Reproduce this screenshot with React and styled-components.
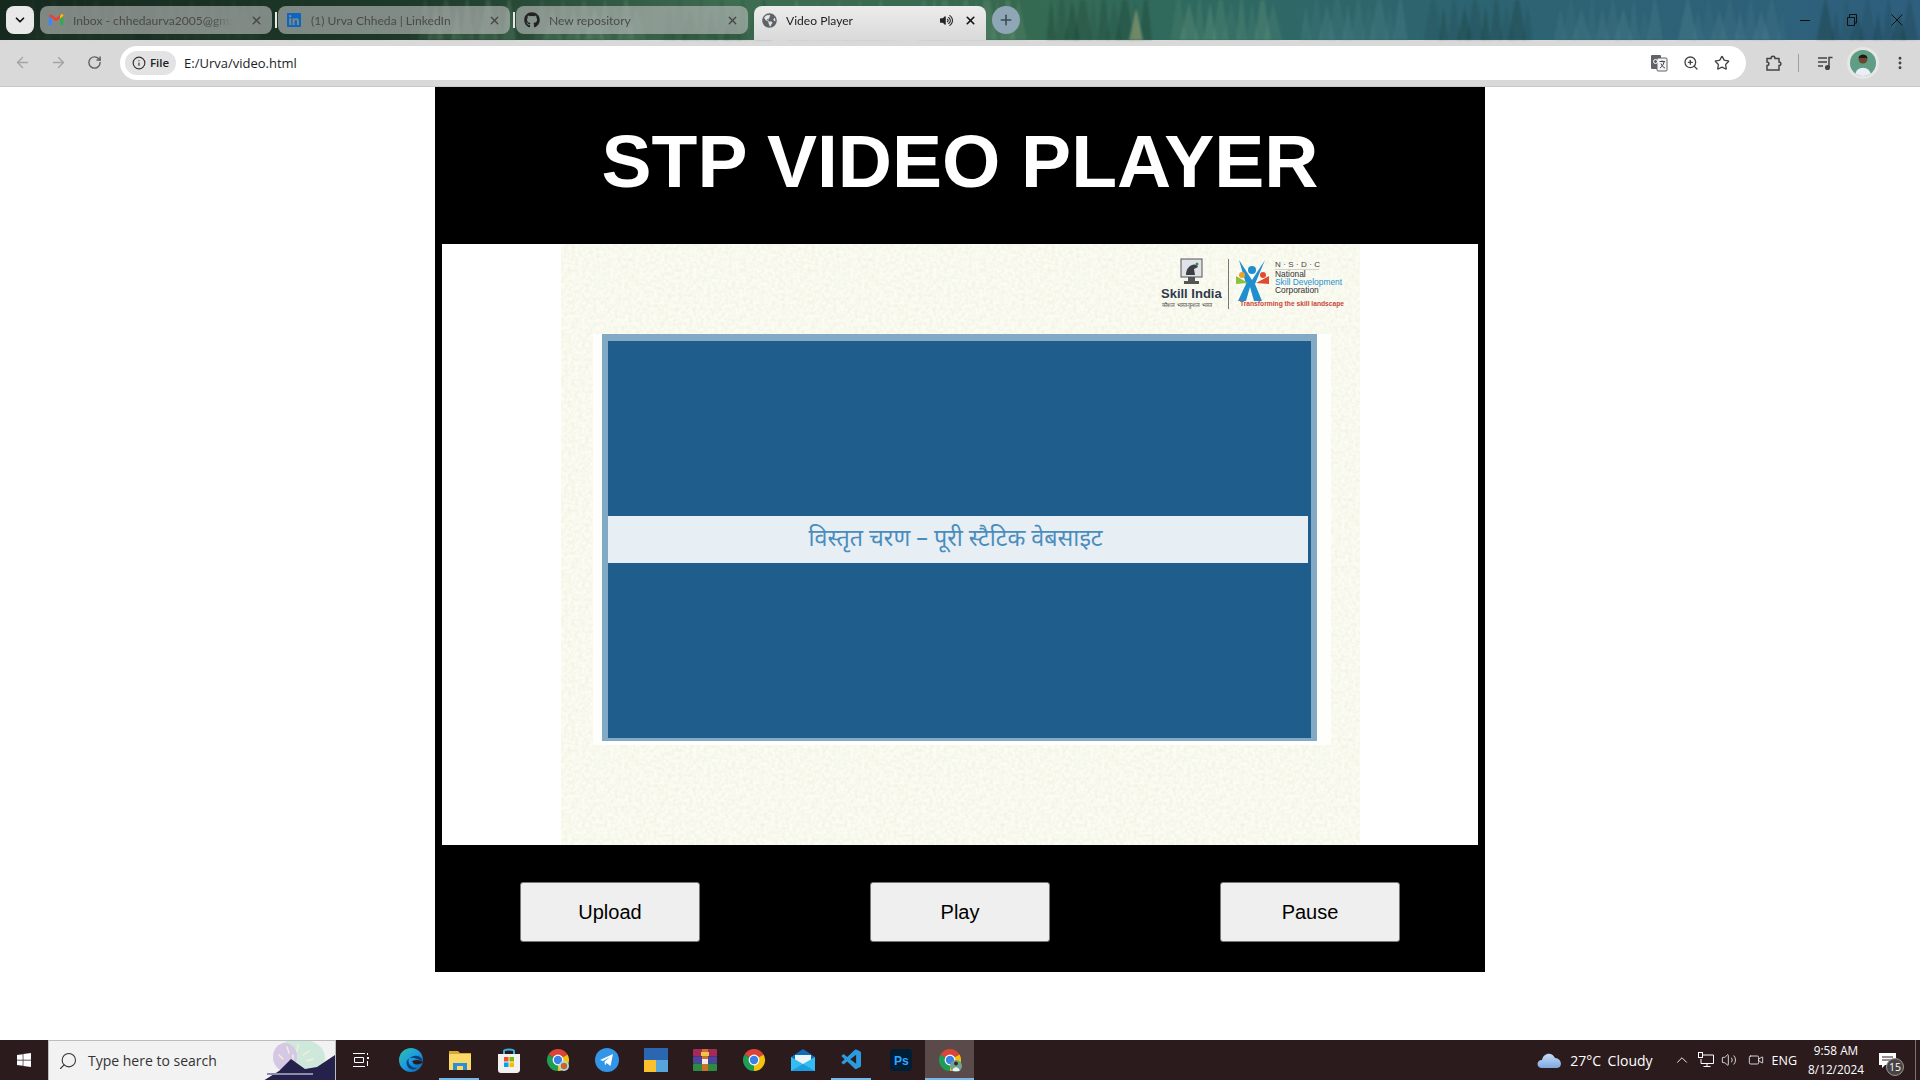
import React from 'react';
import styled, {createGlobalStyle} from 'styled-components';
import {ArrowLeft, ArrowRight, ChevronDown, ChevronUp, Info, MoreVertical, Plus, RotateCw, Search, Star, Video, Volume2, X, ZoomIn} from 'lucide-react';
import {FaGithub, FaGlobeAmericas, FaLinkedin, FaVolumeUp, FaWindows} from 'react-icons/fa';
import {VscVscode} from 'react-icons/vsc';

const GlobalStyle = createGlobalStyle`
  html, body {
    margin: 0;
    padding: 0;
    background: white;
  }
  * {
    box-sizing: border-box;
  }
`

const Page = styled.div`
  width: 1920px;
  height: 1080px;
  display: flex;
  flex-direction: column;
  overflow: hidden;
  font-family: "Open Sans", "Noto Sans", sans-serif;
`

/* ---- browser tabs ---- */

const TabStrip = styled.div`
  position: relative;
  height: 40px;
  flex: none;
  display: flex;
  align-items: flex-start;
  padding: 6px 0 0 6px;
  background: linear-gradient(90deg, #16291f 0%, #1d3a2a 22%, #3f6d52 38%, #36694f 52%, #2f6a5f 62%, #2d6470 75%, #2e5f7e 100%);
`

const Forest = styled.svg`
  position: absolute;
  left: 0;
  top: 0;
  pointer-events: none;
  filter: blur(1.2px);
`

const TabSearch = styled.div`
  position: relative;
  width: 28px;
  height: 28px;
  margin-right: 6px;
  border-radius: 8px;
  background: #e9e9e9;
  display: flex;
  align-items: center;
  justify-content: center;
  color: #111;
`

const Tab = styled.div`
  position: relative;
  width: 232px;
  height: ${props => props.$active ? '34px' : '28px'};
  margin-right: 6px;
  padding: ${props => props.$active ? '0 9px 6px 8px' : '0 9px 0 8px'};
  display: flex;
  align-items: center;
  gap: 9px;
  font-family: Lato, "Open Sans", sans-serif;
  font-size: 12.1px;
  white-space: nowrap;
  color: ${props => props.$active ? '#222' : '#4a4a4a'};
  border-radius: ${props => props.$active ? '8px 8px 0 0' : '8px'};
  background: ${props => props.$active ? 'linear-gradient(#ececec, #d9d9d9)' : 'rgba(190, 190, 190, 0.62)'};
`

const TabTitle = styled.span`
  flex: 1;
  overflow: hidden;
  mask-image: linear-gradient(90deg, #000 82%, transparent 95%);
`

const TabDivider = styled.div`
  position: absolute;
  right: -5px;
  top: 6px;
  width: 2px;
  height: 16px;
  background: #e8e8e8;
`

const NewTab = styled.div`
  position: relative;
  width: 28px;
  height: 28px;
  border-radius: 50%;
  background: #8fa6b6;
  color: #3c4a52;
  display: flex;
  align-items: center;
  justify-content: center;
`

const WindowControls = styled.div`
  position: absolute;
  right: 0;
  top: 6px;
  display: flex;
  color: #111;
`

const WindowButton = styled.div`
  width: 46px;
  height: 28px;
  display: flex;
  align-items: center;
  justify-content: center;
`

/* ---- address bar ---- */

const Toolbar = styled.div`
  height: 47px;
  flex: none;
  display: flex;
  align-items: center;
  padding: 0 8px 1px 4px;
  background: #d9d9d9;
  border-bottom: 1px solid #c8c8c8;
`

const NavButton = styled.div`
  width: 36px;
  height: 28px;
  display: flex;
  align-items: center;
  justify-content: center;
  color: ${props => props.$dim ? '#a4a4a4' : '#5f5f5f'};
`

const Omnibox = styled.div`
  width: 1626px;
  height: 34px;
  margin-left: 8px;
  padding: 0 16px 0 5px;
  border-radius: 17px;
  background: white;
  display: flex;
  align-items: center;
`

const FileChip = styled.div`
  width: 51px;
  height: 24px;
  border-radius: 12px;
  background: #e3e3e3;
  display: flex;
  align-items: center;
  justify-content: center;
  gap: 4px;
  font-size: 11.5px;
  font-weight: 600;
  color: #222;
`

const Url = styled.span`
  flex: 1;
  margin-left: 8px;
  font-size: 13px;
  color: #1c1c1c;
`

const BarIcons = styled.div`
  display: flex;
  align-items: center;
  gap: 15px;
  color: #444;
`

const ToolIcons = styled.div`
  flex: 1;
  display: flex;
  align-items: center;
  justify-content: space-between;
  padding: 0 4px 0 18px;
  color: #444;
`

const BarRule = styled.div`
  width: 1px;
  height: 18px;
  background: #9aa0a6;
`

const Avatar = styled.div`
  width: 26px;
  height: 26px;
  border-radius: 50%;
  box-shadow: 0 0 0 3px #e6e6e6;
  overflow: hidden;
`

/* ---- the page in the browser ---- */

const Content = styled.main`
  flex: 1;
  display: flex;
  justify-content: center;
  background: white;
`

const Player = styled.div`
  width: 1050px;
  height: 885px;
  background: black;
  display: flex;
  flex-direction: column;
`

const Title = styled.h1`
  height: 157px;
  margin: 0;
  padding-bottom: 10px;
  flex: none;
  display: flex;
  align-items: center;
  justify-content: center;
  color: white;
  font-family: "Liberation Sans", Arial, sans-serif;
  font-size: 75px;
  font-weight: bold;
`

const Screen = styled.div`
  height: 601px;
  margin: 0 7px;
  flex: none;
  background: white;
  display: flex;
  justify-content: center;
`

const VideoFrame = styled.div`
  width: 799px;
  height: 601px;
  background-color: #fcfcf4;
  background-image: url("data:image/svg+xml,%3Csvg xmlns='http://www.w3.org/2000/svg' width='240' height='240'%3E%3Cfilter id='n'%3E%3CfeTurbulence type='fractalNoise' baseFrequency='0.28' numOctaves='3'/%3E%3CfeColorMatrix values='0 0 0 0 0.86 0 0 0 0 0.88 0 0 0 0 0.72 0 0 0 1.6 -0.55'/%3E%3C/filter%3E%3Crect width='240' height='240' filter='url(%23n)'/%3E%3C/svg%3E");
  display: flex;
  flex-direction: column;
`

const LogoRow = styled.div`
  height: 90px;
  flex: none;
  display: flex;
  justify-content: flex-end;
  padding: 13px 12px 0 0;
`

const Slide = styled.div`
  width: 738px;
  height: 411px;
  margin-left: 32px;
  padding: 0 14px 4px 9px;
  background: #fefefc;
`

const SlideBorder = styled.div`
  height: 407px;
  padding: 7px 6px 3px 6px;
  background: #82aac4;
`

const SlideBody = styled.div`
  height: 100%;
  padding-top: 175px;
  background: #1f5e8c;
`

const Caption = styled.div`
  width: 700px;
  height: 47px;
  display: flex;
  align-items: center;
  justify-content: center;
  padding: 1px 4px 0 0;
  background: #e8eff4;
  color: #4a8dbd;
  font-family: "Noto Sans Devanagari", "Lohit Devanagari", "Noto Sans", sans-serif;
  font-size: 23.3px;
`

const Controls = styled.div`
  flex: 1;
  display: flex;
  align-items: center;
  justify-content: space-around;
  padding-top: 7px;
`

const Button = styled.button`
  width: 180px;
  height: 60px;
  border: 1px solid #777;
  border-radius: 3px;
  background: #efefef;
  color: black;
  font-family: "Liberation Sans", Arial, sans-serif;
  font-size: 20px;
`

/* ---- windows taskbar ---- */

const Taskbar = styled.footer`
  height: 40px;
  flex: none;
  display: flex;
  align-items: stretch;
  background: #2c1b1d;
  color: white;
`

const StartButton = styled.div`
  width: 48px;
  display: flex;
  align-items: center;
  justify-content: center;
`

const SearchBox = styled.div`
  position: relative;
  width: 288px;
  padding-left: 9px;
  display: flex;
  align-items: center;
  gap: 10px;
  background: #f2f2f2;
  border: 1px solid #bdbdbd;
  border-bottom: none;
  color: #333;
  font-size: 14px;
  overflow: hidden;
`

const SearchArt = styled.svg`
  position: absolute;
  right: 0;
  top: 0;
`

const TaskIcons = styled.div`
  display: flex;
`

const TaskItem = styled.div`
  width: ${props => props.$wide ? '50px' : '49px'};
  display: flex;
  align-items: center;
  justify-content: center;
  background: ${props => props.$active ? '#5a4a4a' : 'transparent'};
  position: relative;

  &::after {
    content: '';
    display: ${props => props.$open ? 'block' : 'none'};
    position: absolute;
    bottom: 0;
    left: ${props => props.$active ? '0' : '4px'};
    right: ${props => props.$active ? '0' : '5px'};
    height: 2px;
    background: #76b9ed;
  }
`

const Tray = styled.div`
  flex: 1;
  display: flex;
  align-items: center;
  justify-content: flex-end;
  font-size: 12.5px;
`

const Weather = styled.div`
  display: flex;
  align-items: center;
  margin-right: 20px;
  gap: 8px;
  font-size: 14px;
`

const WeatherText = styled.span`
  word-spacing: 3px;
`

const TrayIcons = styled.div`
  display: flex;
  align-items: center;
  gap: 7px;
  margin-right: 8px;
`

const MeetIcon = styled(Video)`
  margin-left: 4px;
`

const Clock = styled.div`
  width: 62px;
  margin-left: 8px;
  text-align: center;
  font-size: 11.8px;
  line-height: 19px;
`

const Notify = styled.div`
  position: relative;
  width: 46px;
  height: 100%;
  margin: 0 4px 0 3px;
  padding-right: 10px;
  display: flex;
  align-items: center;
  justify-content: center;
  border-right: 1px solid #777;
`

const NotifyCount = styled.span`
  position: absolute;
  left: 16px;
  top: 18px;
  width: 18px;
  height: 18px;
  border-radius: 50%;
  background: #4a4343;
  border: 1px solid #999;
  font-size: 10.5px;
  line-height: 16px;
  text-align: center;
`

/* ---- drawings ---- */

const Trees = () => {
    const trees = [];
    for(let i = 0; i < 150; i++){
        const x = (i * 127.3) % 1920;
        const w = 10 + (i * 7) % 12;
        const h = 30 + (i * 13) % 30;
        const light = x > 420 ? 0.1 + ((i * 3) % 7) / 40 : 0.04;
        const shade = i % 3 === 0 ? '#0f2a20' : (x > 1300 ? '#5d8f97' : '#80aa8b');
        trees.push(<polygon key={i} points={`${x},${42 - h} ${x + w / 2},42 ${x - w / 2},42`} fill={shade} opacity={light}/>);
    }
    return (
        <Forest width="1920" height="40">
            {trees}
            <polygon points="1136,8 1143,40 1129,40" fill="#8b9a72" opacity="0.7"/>
        </Forest>
    );
}

const sector = (from, to, r = 11) => {
    const a = from * Math.PI / 180;
    const b = to * Math.PI / 180;
    return `M12 12 L${12 + r * Math.cos(a)} ${12 + r * Math.sin(a)} A${r} ${r} 0 0 1 ${12 + r * Math.cos(b)} ${12 + r * Math.sin(b)} Z`;
}

const Chrome = ({size = 24, badge}) => (
    <svg width={size} height={size} viewBox="0 0 24 24">
        <path d={sector(-150, -30)} fill="#db4437"/>
        <path d={sector(-30, 90)} fill="#f4c20d"/>
        <path d={sector(90, 210)} fill="#1f9d55"/>
        <circle cx="12" cy="12" r="5.4" fill="white"/>
        <circle cx="12" cy="12" r="4.2" fill="#3b82e8"/>
        {badge === 'orange' && <>
            <circle cx="18" cy="18" r="5" fill="#a8dde0"/>
            <circle cx="18" cy="18" r="3.2" fill="#d2602a"/>
        </>}
        {badge === 'person' && <>
            <circle cx="18" cy="18" r="6" fill="#6fa58f"/>
            <circle cx="18" cy="15.5" r="2" fill="#3a2a22"/>
            <path d="M14.5 23 C14.5 18 21.5 18 21.5 23 Z" fill="#eef2f6"/>
        </>}
    </svg>
)

const Gmail = () => (
    <svg width="16" height="16" viewBox="0 0 24 24">
        <path d="M1 6 V20 H6 V10 Z" fill="#4285f4"/>
        <path d="M23 6 V20 H18 V10 Z" fill="#34a853"/>
        <path d="M1 6 L12 14 L23 6 L20 3 L12 9 L4 3 Z" fill="#ea4335"/>
        <path d="M18 6 L20 3 C22 3 23 4 23 6 L18 10 Z" fill="#fbbc04"/>
    </svg>
)

const Translate = () => (
    <svg width="18" height="18" viewBox="0 0 18 18">
        <rect x="1" y="1" width="10" height="14" rx="1" fill="#5f6368"/>
        <rect x="7" y="4" width="10" height="13" rx="1" fill="#f4f4f4" stroke="#5f6368"/>
        <path d="M9.5 7.5 H15 M12 6.5 V8 M14 8 C13.5 11 11.5 13 10 14 M11 9.5 C12 12 13.5 13.5 15 14" stroke="#444" fill="none"/>
        <circle cx="5.5" cy="7.5" r="2" fill="none" stroke="white"/>
    </svg>
)

const Extension = () => (
    <svg width="18" height="18" viewBox="0 0 18 18" fill="none" stroke="#444" strokeWidth="1.5">
        <path d="M3 4.5 H7 C7 1.5 11 1.5 11 4.5 H15 V8 C17.5 8 17.5 11.5 15 11.5 V16 H3 V11.5 C5.5 11.5 5.5 8 3 8 Z"/>
    </svg>
)

const MediaQueue = () => (
    <svg width="18" height="18" viewBox="0 0 18 18" fill="none" stroke="#444" strokeWidth="1.5">
        <path d="M2 4 H11 M2 8 H11 M2 12 H7 M13 13 V3.5 H16.5"/>
        <circle cx="11.5" cy="13.5" r="1.8" fill="#444"/>
    </svg>
)

const Person = () => (
    <svg width="26" height="26" viewBox="0 0 26 26">
        <rect width="26" height="26" fill="#5f9d84"/>
        <circle cx="13" cy="9" r="4.5" fill="#6b4630"/>
        <path d="M8.5 8 C9 3.5 17 3.5 17.5 8 Z" fill="#1f1a18"/>
        <path d="M5 26 C5 15 21 15 21 26 Z" fill="#e9eff6"/>
    </svg>
)

const NsdcFigure = () => (
    <g>
        <path d="M81 3 L94 23 L107 3 L97 27 L104 44 L96 44 L92 30 L88 44 L80 44 L88 27 Z" fill="#1f8fd0"/>
        <circle cx="94" cy="13" r="4" fill="#1f8fd0"/>
        <path d="M78 19 L90 26 L78 27 Z" fill="#8ebf3f"/>
        <circle cx="84" cy="18" r="3" fill="#f0a030"/>
        <path d="M111 19 L98 26 L111 27 Z" fill="#e2492f"/>
        <circle cx="105" cy="18" r="3" fill="#e2492f"/>
    </g>
)

const Logos = () => (
    <svg width="190" height="54" viewBox="0 0 190 54" fontFamily="'Liberation Sans', Arial, sans-serif">
        <rect x="23" y="2" width="21" height="18" fill="#dfe3e8" stroke="#555"/>
        <path d="M28 18 C28 8 38 5 40 10 L36 12 L37 18 Z" fill="#3b3f46"/>
        <circle cx="39" cy="7" r="1.5" fill="#3b8f4a"/>
        <path d="M30 20 H37 V24 H41 V27 H26 V24 H30 Z" fill="#555"/>
        <text x="3" y="41" fontSize="13" fontWeight="bold" fill="#2f3a4a">Skill India</text>
        <text x="4" y="50" fontSize="5.5" fill="#444">कौशल भारत-कुशल भारत</text>
        <rect x="70" y="2" width="1" height="50" fill="#777"/>
        <NsdcFigure/>
        <text x="117" y="10" fontSize="8" letterSpacing="2.4" fill="#444">N·S·D·C</text>
        <rect x="117" y="12" width="44" height="0.6" fill="#bbb"/>
        <text x="117" y="20" fontSize="8.4" fill="#333">National</text>
        <text x="117" y="28" fontSize="8.4" fill="#1f8fd0">Skill Development</text>
        <text x="117" y="36" fontSize="8.4" fill="#333">Corporation</text>
        <text x="82" y="49" fontSize="6.7" fontWeight="bold" fill="#c8463a">Transforming the skill landscape</text>
    </svg>
)

const Edge = () => (
    <svg width="24" height="24" viewBox="0 0 24 24">
        <defs>
            <linearGradient id="edgeGrad" x1="0" y1="0" x2="1" y2="1">
                <stop offset="0" stopColor="#2fc1a5"/>
                <stop offset="0.5" stopColor="#1b9de2"/>
                <stop offset="1" stopColor="#0c59a4"/>
            </linearGradient>
        </defs>
        <circle cx="12" cy="12" r="12" fill="url(#edgeGrad)"/>
        <path d="M24 13 C22 7 14 6 10 11 C8 15 12 20 18 20 C14 23 9 21 8 17 C6 12 11 9 15 10" fill="#0d3f7a"/>
        <path d="M13 13 C17 11 22 12 24 14 C23 16 18 17 15 16 Z" fill="#2c1b1d"/>
    </svg>
)

const Explorer = () => (
    <svg width="24" height="22" viewBox="0 0 24 22">
        <path d="M1 2 H10 L12 4 H23 V21 H1 Z" fill="#d9a92f"/>
        <rect x="1" y="5" width="22" height="16" fill="#fbd968"/>
        <path d="M5 21 V14 H19 V21 H15 V17 H9 V21 Z" fill="#2d8ed8"/>
    </svg>
)

const Store = () => (
    <svg width="24" height="25" viewBox="0 0 24 25">
        <path d="M7 7 V3 C7 1 17 1 17 3 V7" fill="none" stroke="#35b4e8" strokeWidth="2"/>
        <path d="M1 6 H23 V22 C23 24 21 25 20 25 H4 C2 25 1 24 1 22 Z" fill="#f1f1f1"/>
        <rect x="7" y="9" width="4.5" height="4.5" fill="#f25022"/>
        <rect x="12.5" y="9" width="4.5" height="4.5" fill="#7fba00"/>
        <rect x="7" y="14.5" width="4.5" height="4.5" fill="#00a4ef"/>
        <rect x="12.5" y="14.5" width="4.5" height="4.5" fill="#ffb900"/>
    </svg>
)

const Telegram = () => (
    <svg width="24" height="24" viewBox="0 0 24 24">
        <circle cx="12" cy="12" r="12" fill="#3295e8"/>
        <path d="M5 12 L18 6 L15.5 18 L11.5 15 L10 17.5 L9.5 13.5 L15 9 L8 13 Z" fill="white"/>
    </svg>
)

const Tiles = () => (
    <svg width="24" height="24" viewBox="0 0 24 24">
        <rect width="24" height="12" fill="#2a67b0"/>
        <rect y="12" width="12" height="12" fill="#fbc02d"/>
        <rect x="12" y="12" width="12" height="12" fill="#58a5dc"/>
    </svg>
)

const WinRar = () => (
    <svg width="24" height="22" viewBox="0 0 24 22">
        <rect y="0" width="24" height="7.5" rx="1" fill="#a52a5a"/>
        <rect y="7.5" width="24" height="7" fill="#4d43a0"/>
        <rect y="14.5" width="24" height="7.5" rx="1" fill="#2f8a43"/>
        <rect x="9" y="0" width="6" height="22" fill="#c9722b"/>
        <rect x="8" y="3" width="8" height="4" fill="#f2c14e"/>
        <rect x="9" y="10" width="6" height="5" fill="#eeeeee"/>
    </svg>
)

const Mail = () => (
    <svg width="24" height="24" viewBox="0 0 24 24">
        <path d="M0 9 L12 1 L24 9 V23 H0 Z" fill="#0f6cbd"/>
        <path d="M4 7 H20 V14 L12 17 L4 14 Z" fill="#eef3f7"/>
        <path d="M0 9 L12 16 L24 9 V23 H0 Z" fill="#33bdf2"/>
        <path d="M0 23 L12 16 L24 23 Z" fill="#1b9de2"/>
    </svg>
)

const Photoshop = () => (
    <svg width="22" height="22" viewBox="0 0 22 22">
        <rect width="22" height="22" rx="4" fill="#001e36"/>
        <text x="4" y="16" fontSize="12" fontWeight="bold" fontFamily="'Liberation Sans', sans-serif" fill="#31a8ff">Ps</text>
    </svg>
)

const TaskView = () => (
    <svg width="16" height="16" viewBox="0 0 16 16" fill="none" stroke="white">
        <path d="M0 1.5 H12 M0 14.5 H12 M1.5 5.5 H10.5 V10.5 H1.5 Z"/>
        <rect x="14" y="5" width="2" height="2" fill="white" stroke="none"/>
        <rect x="14" y="9" width="1" height="5" fill="white" stroke="none"/>
        <rect x="14" y="1" width="1" height="2" fill="white" stroke="none"/>
    </svg>
)

const Cloud = () => (
    <svg width="25" height="16" viewBox="0 0 25 16">
        <defs>
            <linearGradient id="cloudGrad" x1="0" y1="0" x2="0" y2="1">
                <stop offset="0" stopColor="#c5dcf6"/>
                <stop offset="1" stopColor="#7fa8e0"/>
            </linearGradient>
        </defs>
        <path d="M5 16 C-1 16 -1 8 5 8 C6 1 15 -1 18 6 C25 6 26 16 20 16 Z" fill="url(#cloudGrad)"/>
    </svg>
)

const Network = () => (
    <svg width="16" height="16" viewBox="0 0 16 16" fill="none" stroke="white">
        <path d="M3 3 H15.5 V11.5 H3 V7 M9 11.5 V14.5 M5.5 14.5 H12.5"/>
        <rect x="0.5" y="0.5" width="4" height="5" fill="#2c1b1d"/>
    </svg>
)

const Bubble = () => (
    <svg width="17" height="15" viewBox="0 0 17 15">
        <path d="M0 0 H17 V12 H6 L3 15 V12 H0 Z" fill="white"/>
        <path d="M3 4 H14 M3 7 H14" stroke="#2c1b1d"/>
    </svg>
)

const SearchPicture = () => (
    <SearchArt width="72" height="40" viewBox="0 0 72 40">
        <ellipse cx="36" cy="16" rx="26" ry="18" fill="#bfe6d2" opacity="0.7"/>
        <ellipse cx="22" cy="16" rx="12" ry="14" fill="#d6bfe6" opacity="0.8"/>
        <g stroke="#f4f0d8" strokeWidth="1.4" strokeLinecap="round">
            <path d="M20 18 L16 14 M26 12 L24 6 M34 10 L35 4 M40 14 L46 10 M30 18 L30 14 M44 20 L50 18"/>
        </g>
        <path d="M0 40 L16 30 L28 18 L42 28 L54 26 L72 14 V40 Z" fill="#24224a"/>
        <path d="M4 33 H50" stroke="#8f8aa8" strokeWidth="2"/>
    </SearchArt>
)

const tabs = [
    {title: 'Inbox - chhedaurva2005@gmail.com', icon: <Gmail/>},
    {title: '(1) Urva Chheda | LinkedIn', icon: <FaLinkedin size={16} color="#0a66c2"/>},
    {title: 'New repository', icon: <FaGithub size={16} color="#222"/>}
];

const App = () => (
    <Page>
        <GlobalStyle/>
        <TabStrip>
            <Trees/>
            <TabSearch><ChevronDown size={14} strokeWidth={3}/></TabSearch>
            {tabs.map((tab, i) =>
                <Tab key={tab.title}>
                    {tab.icon}
                    <TabTitle>{tab.title}</TabTitle>
                    <X size={13} strokeWidth={2.4} color="#444"/>
                    {i < 2 && <TabDivider/>}
                </Tab>
            )}
            <Tab $active>
                <FaGlobeAmericas size={15} color="#5f6368"/>
                <TabTitle>Video Player</TabTitle>
                <FaVolumeUp size={13} color="#222"/>
                <X size={13} strokeWidth={3} color="#111" style={{marginLeft: 2}}/>
            </Tab>
            <NewTab><Plus size={16} strokeWidth={2.4}/></NewTab>
            <WindowControls>
                <WindowButton>
                    <svg width="10" height="10" viewBox="0 0 10 10" stroke="#111"><path d="M0 5.5 H10"/></svg>
                </WindowButton>
                <WindowButton>
                    <svg width="11" height="12" viewBox="0 0 11 12" stroke="#111" fill="none"><path d="M1.5 3.5 H8.5 V11.5 H1.5 Z M3.5 3 V0.5 H10.5 V9 H9"/></svg>
                </WindowButton>
                <WindowButton>
                    <svg width="12" height="12" viewBox="0 0 12 12" stroke="#111"><path d="M0.5 0.5 L11.5 11.5 M11.5 0.5 L0.5 11.5"/></svg>
                </WindowButton>
            </WindowControls>
        </TabStrip>

        <Toolbar>
            <NavButton $dim><ArrowLeft size={17}/></NavButton>
            <NavButton $dim><ArrowRight size={17}/></NavButton>
            <NavButton><RotateCw size={15} strokeWidth={2.2}/></NavButton>
            <Omnibox>
                <FileChip><Info size={14} color="#333"/>File</FileChip>
                <Url>E:/Urva/video.html</Url>
                <BarIcons>
                    <Translate/>
                    <ZoomIn size={16}/>
                    <Star size={16} strokeWidth={2}/>
                </BarIcons>
            </Omnibox>
            <ToolIcons>
                <Extension/>
                <BarRule/>
                <MediaQueue/>
                <Avatar><Person/></Avatar>
                <MoreVertical size={16} strokeWidth={2.4}/>
            </ToolIcons>
        </Toolbar>

        <Content>
            <Player>
                <Title>STP VIDEO PLAYER</Title>
                <Screen>
                    <VideoFrame>
                        <LogoRow><Logos/></LogoRow>
                        <Slide>
                            <SlideBorder>
                                <SlideBody>
                                    <Caption>विस्तृत चरण – पूरी स्टैटिक वेबसाइट</Caption>
                                </SlideBody>
                            </SlideBorder>
                        </Slide>
                    </VideoFrame>
                </Screen>
                <Controls>
                    <Button>Upload</Button>
                    <Button>Play</Button>
                    <Button>Pause</Button>
                </Controls>
            </Player>
        </Content>

        <Taskbar>
            <StartButton><FaWindows size={16}/></StartButton>
            <SearchBox>
                <Search size={20} strokeWidth={1.3} style={{transform: 'scaleX(-1)'}}/>
                Type here to search
                <SearchPicture/>
            </SearchBox>
            <TaskIcons>
                <TaskItem $wide><TaskView/></TaskItem>
                <TaskItem><Edge/></TaskItem>
                <TaskItem $open><Explorer/></TaskItem>
                <TaskItem><Store/></TaskItem>
                <TaskItem><Chrome badge="orange"/></TaskItem>
                <TaskItem><Telegram/></TaskItem>
                <TaskItem><Tiles/></TaskItem>
                <TaskItem><WinRar/></TaskItem>
                <TaskItem><Chrome/></TaskItem>
                <TaskItem><Mail/></TaskItem>
                <TaskItem $open><VscVscode size={24} color="#2a9be0"/></TaskItem>
                <TaskItem><Photoshop/></TaskItem>
                <TaskItem $open $active><Chrome badge="person"/></TaskItem>
            </TaskIcons>
            <Tray>
                <Weather>
                    <Cloud/>
                    <WeatherText>27°C Cloudy</WeatherText>
                </Weather>
                <TrayIcons>
                    <ChevronUp size={18} strokeWidth={1.2}/>
                    <Network/>
                    <Volume2 size={16} strokeWidth={1.2}/>
                    <MeetIcon size={16} strokeWidth={1.2}/>
                </TrayIcons>
                <span>ENG</span>
                <Clock>9:58 AM<br/>8/12/2024</Clock>
                <Notify>
                    <Bubble/>
                    <NotifyCount>15</NotifyCount>
                </Notify>
            </Tray>
        </Taskbar>
    </Page>
);

export default App;
